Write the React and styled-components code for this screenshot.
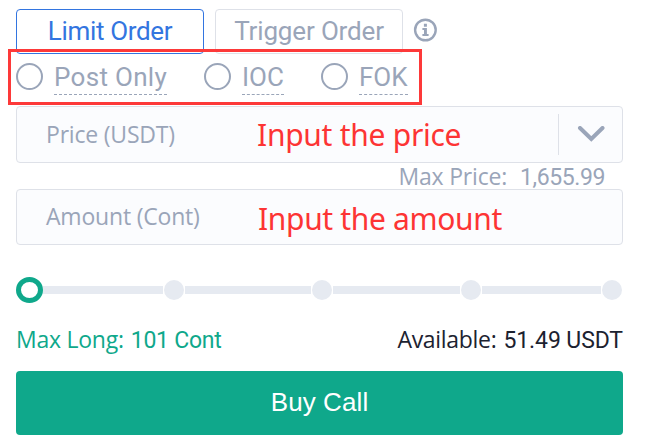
import React from "react";
import styled, { createGlobalStyle } from "styled-components";

const GlobalStyle = createGlobalStyle`
  * { box-sizing: border-box; }
  body { margin: 0; background: #fff; }
`;

const Panel = styled.main`
  display: flex;
  flex-direction: column;
  width: 645px;
  height: 447px;
  padding: 9px 22px 12px 16px;
  overflow: hidden;
  background: #fff;
  color: #9aa5b9;
  font-family: Roboto, sans-serif;
`;

const Tabs = styled.div`
  display: flex;
  gap: 11px;
  height: 45px;
`;

const Tab = styled.button`
  width: 188px;
  height: 45px;
  padding: 0;
  border: 1px solid ${({ $active }) => ($active ? "#3375e0" : "#dee1e8")};
  border-radius: 4px;
  background: #fff;
  color: ${({ $active }) => ($active ? "#3375e0" : "#9aa5b9")};
  font: 400 26px/43px Roboto, sans-serif;
  letter-spacing: ${({ $spacing }) => $spacing}px;
  white-space: nowrap;
`;

const InfoIcon = styled.svg`
  width: 24px;
  height: 24px;
  margin: 9px 0 0 -1px;
`;

const PolicyRow = styled.div`
  position: relative;
  display: flex;
  height: 52px;
  padding-top: 6px;
`;

const Highlight = styled.div`
  position: absolute;
  left: -8px;
  top: -5px;
  width: 414px;
  height: 56px;
  border: 3px solid #fd3939;
`;

const Policy = styled.label`
  display: flex;
  gap: 11px;
  width: ${({ $width }) => $width}px;
`;

const Radio = styled.span`
  width: 27px;
  height: 27px;
  margin-top: 3px;
  border: 2px solid #9aa5b9;
  border-radius: 50%;
`;

const PolicyName = styled.span`
  width: ${({ $width }) => $width}px;
  height: 35px;
  border-bottom: 1px dashed #9aa5b9;
  font-size: 26px;
  line-height: 34px;
  letter-spacing: ${({ $spacing }) => $spacing}px;
  white-space: nowrap;
`;

const Field = styled.div`
  position: relative;
  display: flex;
  align-items: center;
  flex: none;
  height: ${({ $height }) => $height}px;
  padding-left: 29px;
  border: 1px solid #dee1e8;
  border-radius: 4px;
  background: #fbfcfe;
  font: 400 23px/32px "Open Sans", sans-serif;
`;

const FieldLabel = styled.span`
  padding-bottom: 2px;
  letter-spacing: ${({ $spacing }) => $spacing}px;
`;

const Note = styled.span`
  position: absolute;
  left: ${({ $left }) => $left}px;
  top: ${({ $top }) => $top}px;
  color: #fd3434;
  font: 400 30px/40px "Noto Sans", sans-serif;
  letter-spacing: ${({ $spacing }) => $spacing}px;
  white-space: nowrap;
`;

const Toggle = styled.div`
  display: flex;
  align-items: center;
  justify-content: center;
  width: 64px;
  height: 41px;
  margin-left: auto;
  border-left: 1px solid #dee1e8;
`;

const Hint = styled.div`
  display: flex;
  justify-content: flex-end;
  align-items: baseline;
  height: 26px;
  padding-right: 18px;
  gap: 13px;
  font-size: 23px;
  line-height: 27px;
`;

const Caption = styled.span`
  font-family: "Open Sans", sans-serif;
  font-weight: 400;
  font-size: 23px;
  letter-spacing: ${({ $spacing }) => $spacing}px;
`;

const Value = styled.span`
  letter-spacing: ${({ $spacing }) => $spacing}px;
`;

const Slider = styled.div`
  display: flex;
  align-items: center;
  height: 27px;
  margin-top: 31px;
`;

const Thumb = styled.span`
  flex: none;
  width: 27px;
  height: 26px;
  border: 5px solid #0fa88b;
  border-radius: 50%;
`;

const Track = styled.span`
  flex: none;
  width: ${({ $width }) => $width}px;
  height: 8px;
  background: #e6eaf1;
`;

const Stop = styled.span`
  flex: none;
  width: 20px;
  height: 20px;
  margin: 0 1px;
  border-radius: 50%;
  background: #e6eaf1;
`;

const Summary = styled.div`
  display: flex;
  justify-content: space-between;
  height: 68px;
  padding-top: 20px;
  font-size: 23px;
  line-height: 32px;
`;

const SummaryItem = styled.div`
  display: flex;
  align-items: baseline;
  gap: 7px;
  color: ${({ $positive }) => ($positive ? "#0fa88b" : "#1c2230")};
  white-space: nowrap;
`;

const BuyButton = styled.button`
  height: 64px;
  flex: none;
  padding: 0 0 2px;
  border: 0;
  border-radius: 4px;
  background: #0fa88b;
  color: #fff;
  font: 400 26px/60px "Liberation Sans", Arial, sans-serif;
  letter-spacing: 0.1px;
`;

const policies = [
  { name: "Post Only", width: 188, text: 113, spacing: 0.3 },
  { name: "IOC", width: 117, text: 42, spacing: 0 },
  { name: "FOK", width: 90, text: 49, spacing: 0 },
];

const tracks = [120, 126, 127, 119];

export default function App() {
  return (
    <>
      <GlobalStyle />
      <Panel>
        <Tabs>
          <Tab $active $spacing={-0.35}>Limit Order</Tab>
          <Tab $spacing={-0.15}>Trigger Order</Tab>
          <InfoIcon viewBox="0 0 24 24" fill="none">
            <circle cx="12.4" cy="12" r="10.3" stroke="#9aa5b9" strokeWidth="2.4" />
            <path d="M10.9 5.7h3v3h-3zM9.4 10h4.5v6h1.7v2H9.4v-2h1.6v-4H9.4z" fill="#9aa5b9" />
          </InfoIcon>
        </Tabs>
        <PolicyRow>
          {policies.map((p) => (
            <Policy key={p.name} $width={p.width}>
              <Radio />
              <PolicyName $width={p.text} $spacing={p.spacing}>{p.name}</PolicyName>
            </Policy>
          ))}
          <Highlight />
        </PolicyRow>
        <Field $height={57}>
          <FieldLabel $spacing={-0.2}>Price (USDT)</FieldLabel>
          <Note $left={240} $top={8} $spacing={-0.27}>Input the price</Note>
          <Toggle>
            <svg width="28" height="18" viewBox="0 0 28 18" fill="none">
              <path d="M3 2l11.3 11L25.5 2" stroke="#9aa5b9" strokeWidth="4" strokeLinecap="round" />
            </svg>
          </Toggle>
        </Field>
        <Hint>
          <Caption $spacing={-0.2}>Max Price:</Caption>
          <Value $spacing={-0.4}>1,655.99</Value>
        </Hint>
        <Field $height={56}>
          <FieldLabel $spacing={-0.2}>Amount (Cont)</FieldLabel>
          <Note $left={241} $top={9} $spacing={-0.34}>Input the amount</Note>
        </Field>
        <Slider>
          <Thumb />
          {tracks.map((width, i) => (
            <React.Fragment key={i}>
              <Track $width={width} />
              <Stop />
            </React.Fragment>
          ))}
        </Slider>
        <Summary>
          <SummaryItem $positive>
            <Caption $spacing={-0.25}>Max Long:</Caption>
            <Value $spacing={-0.25}>101 Cont</Value>
          </SummaryItem>
          <SummaryItem>
            <Caption $spacing={-0.3}>Available:</Caption>
            <Value $spacing={-0.1}>51.49 USDT</Value>
          </SummaryItem>
        </Summary>
        <BuyButton>Buy Call</BuyButton>
      </Panel>
    </>
  );
}
